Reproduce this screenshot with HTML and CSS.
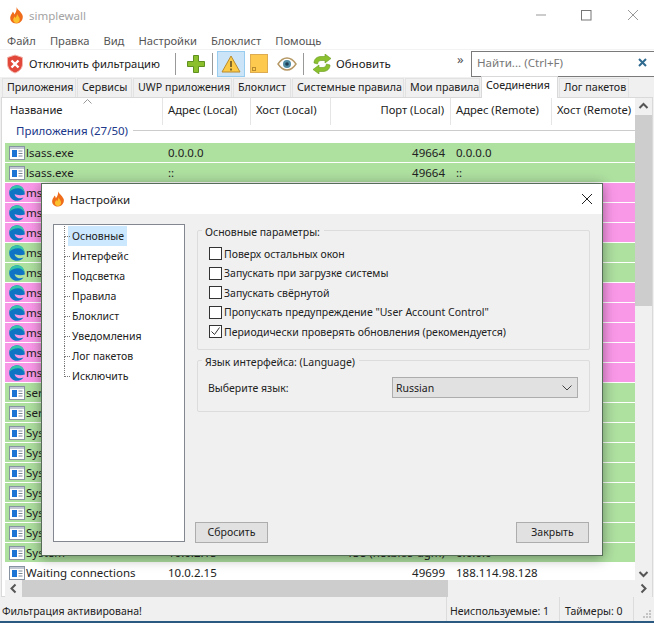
FILE: index.html
```html
<!DOCTYPE html>
<html lang="ru">
<head>
  <meta charset="UTF-8">
  <title>simplewall</title>
  <link rel="stylesheet" href="styles.css">
</head>
<body>

<svg class="defs" width="0" height="0">
  <symbol id="flame" viewBox="0 0 16 18">
    <path d="M8 0c1 3 5 5 6.500 9 1 3.500-1.500 8.500-6.500 8.500S.5 13.500 1.500 10C2 8 3.500 7 4 5c1 .8 1.500 1.800 1.500 3C7.500 6 8.500 3 8 0z" fill="#ef6c1a"/>
    <path d="M8.500 7c.5 2 3 3.500 3 6 0 2.500-1.500 4-3.500 4s-3.500-1.500-3.500-3.500c0-1.500 1-2.500 1.500-3.500.5.500 1 1 1 1.800C7.500 10.500 8.800 9 8.500 7z" fill="#fbc02d"/>
  </symbol>
  <symbol id="app" viewBox="0 0 16 14">
    <rect x=".5" y=".5" width="15" height="13" fill="#fff" stroke="#8793a3"/>
    <rect x="1" y="1" width="14" height="2" fill="#c3cad3"/>
    <rect x="3" y="4" width="5" height="7" fill="#1b74d4"/>
    <path d="M9.500 5h4M9.500 7.500h4M9.500 10h4" stroke="#7d8896"/>
  </symbol>
  <symbol id="edge" viewBox="0 0 16 16">
    <path d="M15.800 9.500C15.800 4 12.500.2 8 .2 3.500.2.200 3.800.200 8c0 4.500 3.500 7.800 7.800 7.800 2.700 0 5-1.200 6.500-3.300-2 1-4.500 1-6 .2-2-.9-3-2.200-2.700-3.700 1.500 1 6 1.700 10 .5z" fill="#0f74c4"/>
    <path d="M.3 7C1 3 4 .2 8 .2c4.500 0 7.600 3.500 7.800 8-.8-3-3.500-5-6.800-5C5.500 3.200 2 4.500.3 7z" fill="#35c5a8"/>
  </symbol>
</svg>

<div class="window">

  <div class="titlebar">
    <svg class="title-icon"><use href="#flame"/></svg>
    <span class="title-text">simplewall</span>
    <div class="win-buttons">
      <svg width="12" height="12" viewBox="0 0 12 12"><path d="M1 6h10" stroke="#999"/></svg>
      <svg width="12" height="12" viewBox="0 0 12 12"><rect x=".5" y="1.500" width="9.500" height="9.500" fill="none" stroke="#777"/></svg>
      <svg width="12" height="12" viewBox="0 0 12 12"><path d="M1 1l10 10M11 1L1 11" stroke="#999"/></svg>
    </div>
  </div>

  <div class="menu">
    <span>Файл</span><span>Правка</span><span>Вид</span><span>Настройки</span><span>Блоклист</span><span>Помощь</span>
  </div>

  <div class="toolbar">
    <svg class="tool-shield" width="18" height="20" viewBox="0 0 18 20">
      <path d="M9 1l7.500 2.500V10c0 4.500-3.500 7.500-7.500 9-4-1.500-7.500-4.500-7.500-9V3.500z" fill="#e2483a" stroke="#f3b7ae"/>
      <path d="M5.500 6.500l7 7M12.500 6.500l-7 7" stroke="#fff" stroke-width="2.400"/>
    </svg>
    <span class="tool-label label-filter">Отключить фильтрацию</span>
    <span class="tool-sep sep-first"></span>
    <svg class="tool-plus" width="20" height="20" viewBox="0 0 20 20">
      <path d="M7.500 1.500h5v6h6v5h-6v6h-5v-6h-6v-5h6z" fill="#8bbf2c" stroke="#5f8f1e"/>
    </svg>
    <span class="tool-sep sep-second"></span>
    <div class="tool-active">
      <svg width="20" height="18" viewBox="0 0 20 18">
        <path d="M10 1l9 16H1z" fill="#fbcb47" stroke="#b98a2e"/>
        <path d="M10 6v6M10 13.500v2" stroke="#5b4a22" stroke-width="1.500"/>
      </svg>
    </div>
    <span class="tool-note"><span class="note-fold"></span></span>
    <svg class="tool-eye" width="20" height="14" viewBox="0 0 20 14">
      <path d="M1 7c3-4.500 6-6 9-6s6 1.500 9 6c-3 4.500-6 6-9 6S4 11.500 1 7z" fill="#fff" stroke="#b69865" stroke-width="1.400"/>
      <circle cx="10" cy="7" r="4" fill="#4f8aa3"/>
      <circle cx="10" cy="7" r="1.800" fill="#1f3f55"/>
    </svg>
    <span class="tool-sep sep-third"></span>
    <svg class="tool-refresh" width="20" height="20" viewBox="0 0 20 20">
      <path d="M2 9c0-4 3-6.500 7-6.500h4V0l6 4.500-6 4.500V6.500H9C7 6.500 6 8 5.500 10z" fill="#8bc02f" stroke="#689a1f" stroke-width=".6"/>
      <path d="M18 11c0 4-3 6.500-7 6.500H7V20l-6-4.500L7 11v2.500h4c2 0 3-1.500 3.500-3.500z" fill="#8bc02f" stroke="#689a1f" stroke-width=".6"/>
    </svg>
    <span class="tool-label label-refresh">Обновить</span>
    <span class="tool-more">»</span>
    <div class="search">
      <span class="search-hint">Найти... (Ctrl+F)</span>
      <svg width="9" height="9" viewBox="0 0 9 9"><path d="M1 1l7 7M8 1L1 8" stroke="#2f6a8f" stroke-width="2"/></svg>
    </div>
  </div>

  <div class="tabs">
    <span class="tab tab-apps">Приложения</span>
    <span class="tab tab-services">Сервисы</span>
    <span class="tab tab-uwp">UWP приложения</span>
    <span class="tab tab-block">Блоклист</span>
    <span class="tab tab-system">Системные правила</span>
    <span class="tab tab-rules">Мои правила</span>
    <span class="tab tab-conn active">Соединения</span>
    <span class="tab tab-log">Лог пакетов</span>
  </div>

  <div class="panel">
    <div class="list-area">
      <div class="list">
        <div class="head cols">
          <span>Название</span><span>Адрес (Local)</span><span>Хост (Local)</span><span class="num">Порт (Local)</span><span>Адрес (Remote)</span><span>Хост (Remote)</span>
          <svg class="sort" width="9" height="5" viewBox="0 0 9 5"><path d="M.5 4.500l4-4 4 4" fill="none" stroke="#999"/></svg>
        </div>
        <div class="group"><span>Приложения (27/50)</span></div>

        <div class="row cols green"><span class="name"><svg class="ico"><use href="#app"/></svg>lsass.exe</span><span>0.0.0.0</span><span></span><span class="num">49664</span><span>0.0.0.0</span><span></span></div>
        <div class="row cols green"><span class="name"><svg class="ico"><use href="#app"/></svg>lsass.exe</span><span>::</span><span></span><span class="num">49664</span><span>::</span><span></span></div>
        <div class="row cols pink"><span class="name"><svg class="ico"><use href="#edge"/></svg>msedge.exe</span></div>
        <div class="row cols pink"><span class="name"><svg class="ico"><use href="#edge"/></svg>msedge.exe</span></div>
        <div class="row cols pink"><span class="name"><svg class="ico"><use href="#edge"/></svg>msedge.exe</span></div>
        <div class="row cols green"><span class="name"><svg class="ico"><use href="#edge"/></svg>msedge.exe</span></div>
        <div class="row cols green"><span class="name"><svg class="ico"><use href="#edge"/></svg>msedge.exe</span></div>
        <div class="row cols pink"><span class="name"><svg class="ico"><use href="#edge"/></svg>msedge.exe</span></div>
        <div class="row cols pink"><span class="name"><svg class="ico"><use href="#edge"/></svg>msedge.exe</span></div>
        <div class="row cols pink"><span class="name"><svg class="ico"><use href="#edge"/></svg>msedge.exe</span></div>
        <div class="row cols pink"><span class="name"><svg class="ico"><use href="#edge"/></svg>msedge.exe</span></div>
        <div class="row cols pink"><span class="name"><svg class="ico"><use href="#edge"/></svg>msedge.exe</span></div>
        <div class="row cols green"><span class="name"><svg class="ico"><use href="#app"/></svg>services.exe</span></div>
        <div class="row cols green"><span class="name"><svg class="ico"><use href="#app"/></svg>services.exe</span></div>
        <div class="row cols green"><span class="name"><svg class="ico"><use href="#app"/></svg>System</span></div>
        <div class="row cols green"><span class="name"><svg class="ico"><use href="#app"/></svg>System</span></div>
        <div class="row cols green"><span class="name"><svg class="ico"><use href="#app"/></svg>System</span></div>
        <div class="row cols green"><span class="name"><svg class="ico"><use href="#app"/></svg>System</span></div>
        <div class="row cols green"><span class="name"><svg class="ico"><use href="#app"/></svg>System</span></div>
        <div class="row cols green"><span class="name"><svg class="ico"><use href="#app"/></svg>System</span></div>
        <div class="row cols green"><span class="name"><svg class="ico"><use href="#app"/></svg>System</span><span>10.0.2.15</span><span></span><span class="num">138 (netbios-dgm)</span><span>0.0.0.0</span><span></span></div>
        <div class="row cols plain"><span class="name"><svg class="ico"><use href="#app"/></svg>Waiting connections</span><span>10.0.2.15</span><span></span><span class="num">49699</span><span>188.114.98.128</span><span></span></div>
      </div>
      <div class="vscroll">
        <svg class="arrow" width="17" height="17" viewBox="0 0 17 17"><path d="M4.500 10l4-4 4 4" fill="none" stroke="#555" stroke-width="2"/></svg>
        <div class="vthumb"></div>
        <div class="vtrack"></div>
        <svg class="arrow" width="17" height="10" viewBox="0 0 17 10"><path d="M4.500 2l4 4 4-4" fill="none" stroke="#555" stroke-width="2"/></svg>
      </div>
    </div>
    <div class="hscroll">
      <svg class="arrow" width="17" height="17" viewBox="0 0 17 17"><path d="M10.500 4.500l-4 4 4 4" fill="none" stroke="#555" stroke-width="2"/></svg>
      <div class="hthumb"></div>
      <div class="htrack"></div>
      <svg class="arrow" width="17" height="17" viewBox="0 0 17 17"><path d="M6.500 4.500l4 4-4 4" fill="none" stroke="#555" stroke-width="2"/></svg>
    </div>
  </div>

  <div class="status">
    <span class="st-main">Фильтрация активирована!</span>
    <span class="st-unused">Неиспользуемые: 1</span>
    <span class="st-timers">Таймеры: 0</span>
    <svg class="grip" width="12" height="12" viewBox="0 0 12 12"><path d="M9 2h2v2H9zM6 5h2v2H6zM9 5h2v2H9zM3 8h2v2H3zM6 8h2v2H6zM9 8h2v2H9z" fill="#c4c4c4"/></svg>
  </div>

  <div class="dialog">
    <div class="dlg-title">
      <svg class="dlg-icon"><use href="#flame"/></svg>
      <span>Настройки</span>
      <svg class="dlg-close" width="12" height="12" viewBox="0 0 12 12"><path d="M1 1l10 10M11 1L1 11" stroke="#222"/></svg>
    </div>
    <div class="dlg-body">
      <div class="dlg-main">
        <ul class="tree">
          <li><span class="selected">Основные</span></li>
          <li><span>Интерфейс</span></li>
          <li><span>Подсветка</span></li>
          <li><span>Правила</span></li>
          <li><span>Блоклист</span></li>
          <li><span>Уведомления</span></li>
          <li><span>Лог пакетов</span></li>
          <li><span>Исключить</span></li>
        </ul>
        <div class="dlg-right">
          <fieldset class="box box-main">
            <legend>Основные параметры:</legend>
            <div class="opt"><span class="check"></span>Поверх остальных окон</div>
            <div class="opt"><span class="check"></span>Запускать при загрузке системы</div>
            <div class="opt"><span class="check"></span>Запускать свёрнутой</div>
            <div class="opt"><span class="check"></span>Пропускать предупреждение "User Account Control"</div>
            <div class="opt"><span class="check"><svg width="11" height="11" viewBox="0 0 11 11"><path d="M1.500 5.500l3 3 5-7" fill="none" stroke="#333"/></svg></span>Периодически проверять обновления (рекомендуется)</div>
          </fieldset>
          <fieldset class="box box-lang">
            <legend>Язык интерфейса: (Language)</legend>
            <div class="lang-row">
              <span>Выберите язык:</span>
              <div class="select">
                <span>Russian</span>
                <svg width="10" height="6" viewBox="0 0 10 6"><path d="M.5.500l4.500 4.500L9.500.5" fill="none" stroke="#444"/></svg>
              </div>
            </div>
          </fieldset>
          <div class="spacer"></div>
          <div class="dlg-buttons">
            <span class="btn">Сбросить</span>
            <span class="btn">Закрыть</span>
          </div>
        </div>
      </div>
    </div>
  </div>

</div>

</body>
</html>
```

FILE: styles.css
```css
* {
  box-sizing: border-box;
}
body {
  margin: 0;
  font-family: "Noto Sans", "Liberation Sans", sans-serif;
  font-size: 10.500px;
  color: #222;
  overflow: hidden;
}
.defs {
  position: absolute;
}
.window {
  position: relative;
  display: flex;
  flex-direction: column;
  width: 654px;
  height: 623px;
  background: #f0f0f0;
  border-bottom: 2px solid #2b5a80;
  overflow: hidden;
}

/* title bar */
.titlebar {
  display: flex;
  flex: none;
  align-items: center;
  height: 30px;
  padding-left: 9px;
  background: #fff;
}
.title-icon {
  width: 15px;
  height: 17px;
}
.title-text {
  margin-left: 5px;
  font-size: 11.500px;
  color: #a3a3a3;
}
.win-buttons {
  display: flex;
  gap: 34px;
  margin-left: auto;
  padding-right: 15px;
}

/* menu */
.menu {
  display: flex;
  flex: none;
  align-items: center;
  gap: 14px;
  height: 19px;
  padding: 2px 0 0 7px;
  background: #fff;
  color: #555;
  font-size: 11.200px;
}

/* toolbar */
.toolbar {
  display: flex;
  flex: none;
  align-items: center;
  height: 28px;
  padding-left: 6px;
  background: #fff;
  border-top: 1px solid #f3f3f3;
}
.tool-label {
  white-space: nowrap;
}
.label-filter {
  width: 140px;
  margin-left: 5px;
  font-size: 11.200px;
}
.label-refresh {
  margin-left: 4px;
  font-size: 11.500px;
}
.tool-sep {
  width: 1px;
  height: 22px;
  background: #999;
}
.sep-first {
  margin-left: 6px;
}
.tool-plus {
  margin-left: 10px;
}
.sep-second {
  margin-left: 6px;
}
.tool-active {
  display: flex;
  align-items: center;
  justify-content: center;
  width: 28px;
  height: 26px;
  margin-left: 4px;
  background: #cce4f7;
  border: 1px solid #99cdf0;
}
.tool-note {
  position: relative;
  width: 18px;
  height: 19px;
  margin-left: 5px;
  background: #fdc94e;
  border: 1px solid #dcab52;
}
.note-fold {
  position: absolute;
  left: 1px;
  bottom: 1px;
  width: 4px;
  height: 4px;
  border: 1px solid #b98a2e;
}
.tool-eye {
  margin-left: 9px;
}
.sep-third {
  margin-left: 6px;
}
.tool-refresh {
  margin-left: 8px;
}
.tool-more {
  margin: -10px 0 0 auto;
  width: 14px;
  color: #555;
  font-size: 13px;
}
.search {
  display: flex;
  align-items: center;
  justify-content: space-between;
  width: 183px;
  height: 26px;
  padding: 0 7px 2px 5px;
  background: #fff;
  border: 1px solid #7a7a7a;
  border-right: 0;
}
.search-hint {
  color: #777;
  font-size: 11.600px;
}

/* tabs */
.tabs {
  display: flex;
  flex: none;
  align-items: flex-end;
  height: 20px;
  padding-left: 2px;
  font-size: 10.700px;
}
.tab {
  height: 19px;
  margin-right: 1px;
  padding: 1px 0 0 4px;
  background: #f0f0f0;
  border: 1px solid #e2e2e2;
  border-bottom: 0;
  white-space: nowrap;
  overflow: hidden;
}
.tab.active {
  position: relative;
  top: 1px;
  height: 22px;
  margin-top: -2px;
  background: #fff;
  border-color: #d9d9d9;
}
.tab-apps { width: 74px; }
.tab-services { width: 55px; }
.tab-uwp { width: 99px; }
.tab-block { width: 58px; }
.tab-system { width: 112px; }
.tab-rules { width: 75px; }
.tab-conn { width: 77px; }
.tab-log { width: 70px; }

/* list */
.panel {
  display: flex;
  flex: none;
  flex-direction: column;
  height: 500px;
  margin: 0 1px;
  padding-left: 3px;
  background: #fff;
  border: 1px solid #d9d9d9;
}
.list-area {
  display: flex;
  flex: none;
  height: 482px;
}
.list {
  width: 631px;
  overflow: hidden;
  font-size: 11.500px;
}
.cols {
  display: grid;
  grid-template-columns: 158px 88px 80px 120px 101px 84px;
}
.cols > span {
  padding-left: 5px;
  white-space: nowrap;
  overflow: hidden;
}
.cols > .num {
  padding: 0 6px 0 0;
  text-align: right;
}
.head {
  position: relative;
  align-items: start;
  height: 27px;
  font-size: 11.200px;
}
.head > span {
  height: 27px;
  line-height: 23px;
  border-right: 1px solid #e5e5e5;
}
.sort {
  position: absolute;
  left: 78px;
  top: 1px;
}
.group {
  display: flex;
  align-items: center;
  height: 18px;
  padding: 0 0 8px 11px;
  color: #20388a;
}
.group::after {
  content: "";
  flex: 1;
  height: 1px;
  margin-left: 5px;
  background: #ccc;
}
.row {
  align-items: center;
  height: 20px;
  border-bottom: 1px solid #fff;
}
.row.green {
  background: #aee0a0;
}
.row.pink {
  background: #fa98e8;
}
.cols > .name {
  display: flex;
  align-items: center;
  padding-left: 4px;
}
.ico {
  flex: none;
  width: 16px;
  height: 16px;
  margin-right: 1px;
}

/* scrollbars */
.vscroll {
  display: flex;
  flex-direction: column;
  width: 17px;
  background: #f0f0f0;
}
.vthumb {
  height: 191px;
  background: #cdcdcd;
}
.vtrack,
.htrack {
  flex: 1;
}
.arrow {
  flex: none;
}
.hscroll {
  display: flex;
  flex: none;
  height: 17px;
  background: #f0f0f0;
}
.hthumb {
  width: 426px;
  background: #cdcdcd;
}

/* status bar */
.status {
  display: flex;
  flex: 1;
  align-items: center;
  min-height: 0;
  white-space: nowrap;
}
.status > span {
  height: 100%;
  padding: 7px 0 0 2px;
  border-right: 1px solid #dcdcdc;
}
.status > .st-main {
  width: 447px;
}
.status > .st-unused {
  width: 113px;
  padding-left: 3px;
}
.status > .st-timers {
  width: 74px;
  padding-left: 5px;
}
.grip {
  margin: 10px 0 0 6px;
}

/* settings dialog */
.dialog {
  position: absolute;
  left: 41px;
  top: 183px;
  display: flex;
  flex-direction: column;
  width: 562px;
  height: 373px;
  background: #f0f0f0;
  border: 1px solid #566e58;
  box-shadow: 0 2px 12px rgba(0, 0, 0, 0.4);
}
.dlg-title {
  display: flex;
  align-items: center;
  height: 30px;
  padding: 0 9px;
  background: #fff;
  font-size: 11.500px;
}
.dlg-icon {
  width: 14px;
  height: 16px;
  margin-right: 5px;
}
.dlg-close {
  margin-left: auto;
}
.dlg-body {
  flex: 1;
  padding: 10px 12px 12px 11px;
}
.dlg-main {
  display: flex;
  height: 100%;
}
.tree {
  width: 132px;
  height: 318px;
  margin: 0;
  padding: 1px 0 0 14px;
  list-style: none;
  background: #fff;
  border: 1px solid #828790;
}
.tree li {
  position: relative;
  height: 20px;
  line-height: 20px;
}
.tree li::before {
  content: "";
  position: absolute;
  left: -4px;
  top: 0;
  width: 5px;
  height: 10px;
  border-left: 1px dotted #777;
  border-bottom: 1px dotted #777;
}
.tree li::after {
  content: "";
  position: absolute;
  left: -4px;
  top: 10px;
  height: 10px;
  border-left: 1px dotted #777;
}
.tree li:last-child::after {
  display: none;
}
.tree span {
  display: inline-block;
  padding-left: 4px;
}
.tree .selected {
  background: #cce8ff;
  width: 59px;
}
.dlg-right {
  display: flex;
  flex-direction: column;
  flex: 1;
  margin-left: 12px;
}
.box {
  margin: 0;
  padding: 0 8px 0 11px;
  border: 1px solid #dcdcdc;
  border-radius: 2px;
}
.box legend {
  margin-left: -7px;
  padding: 4px 4px 0 3px;
  line-height: 14px;
}
.box-main {
  height: 129px;
  margin-top: -3px;
  padding-top: 5px;
}
.opt {
  display: flex;
  align-items: center;
  height: 19.500px;
}
.check {
  display: flex;
  align-items: center;
  justify-content: center;
  width: 13px;
  height: 13px;
  margin-right: 2px;
  background: #fff;
  border: 1px solid #333;
}
.box-lang {
  height: 61px;
  margin-top: 1px;
}
.lang-row {
  display: flex;
  align-items: center;
  justify-content: space-between;
  margin: 8px 3px 0 -1px;
}
.select {
  display: flex;
  align-items: center;
  justify-content: space-between;
  width: 186px;
  height: 21px;
  padding: 0 5px 0 3px;
  background: #e1e1e1;
  border: 1px solid #adadad;
}
.spacer {
  flex: 1;
}
.dlg-buttons {
  display: flex;
  justify-content: space-between;
  margin: 0 1px 0 -2px;
}
.btn {
  width: 73px;
  height: 21px;
  line-height: 19px;
  text-align: center;
  background: #e1e1e1;
  border: 1px solid #adadad;
}
```
